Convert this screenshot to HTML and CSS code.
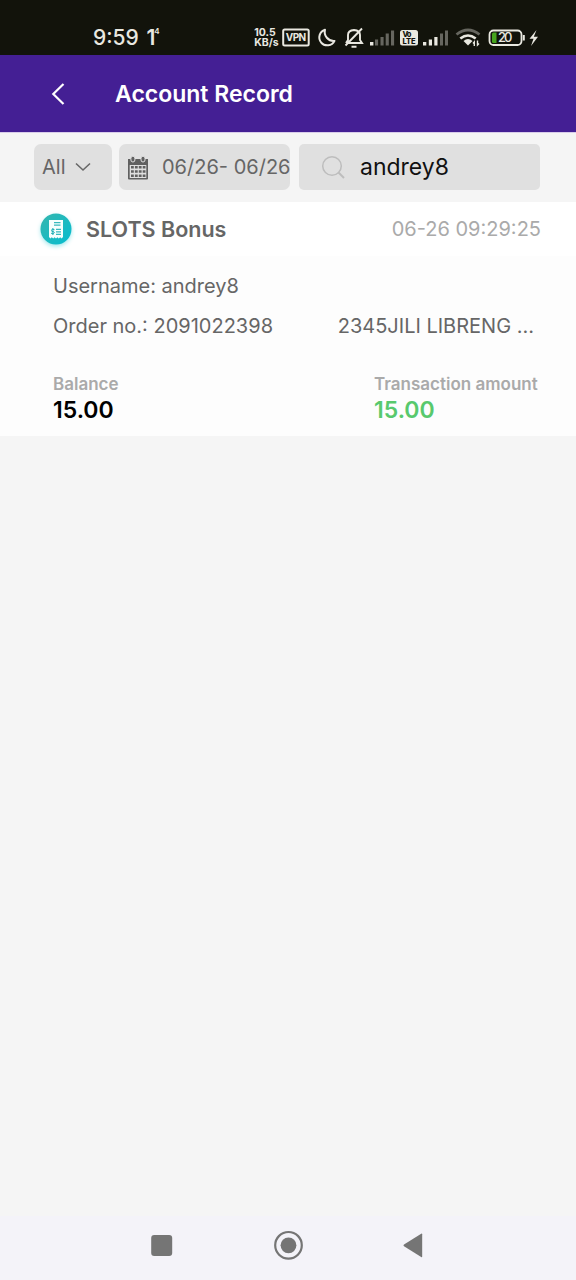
FILE: index.html
```html
<!DOCTYPE html>
<html lang="en">
<head>
<meta charset="utf-8">
<title>Account Record</title>
<link rel="stylesheet" href="styles.css">
</head>
<body>
<div class="screen">
  <div class="status">
    <span class="clock">9:59</span>
    <span class="notice">1<sup>4</sup></span>
    <div class="rate"><span>10.5</span><span>KB/s</span></div>
    <svg class="status-icons" width="296" height="30" viewBox="0 0 296 30" fill="none" stroke="#e9e8e0" stroke-width="2">
      <rect x="3.2" y="6.5" width="25.5" height="16" rx="1.5"/>
      <text class="vpn" x="5.7" y="18.3" textLength="20.5">VPN</text>
      <path d="M45 6.7a8 8 0 1 0 9.5 11.2A9 9 0 0 1 45 6.7Z" stroke-linejoin="round"/>
      <path d="M67.500 20h14.500l-2-3v-5q0-4.500-6-5q-6 .5-6 5v5l-2 3M82 5.500 65.500 22.500M71.500 23.700h5" stroke-width="1.900"/>
      <g stroke="none" fill="#66665f">
        <rect x="95" y="16.500" width="3.100" height="6"/><rect x="100.500" y="14" width="3.100" height="8.500"/><rect x="105.700" y="10.500" width="3.100" height="12"/><rect x="111" y="7.500" width="3.100" height="15"/>
        <rect x="160" y="10.500" width="3" height="12"/><rect x="165" y="7.500" width="3" height="15"/>
      </g>
      <g stroke="none" fill="#e9e8e0">
        <rect x="90" y="19" width="3.400" height="3.500"/>
        <rect x="120" y="7" width="18" height="15.500" rx="2.500"/>
        <rect x="143" y="19" width="3.300" height="3.500"/><rect x="148.800" y="16.500" width="3.200" height="6"/><rect x="154.300" y="14" width="3.200" height="8.500"/>
        <path d="M188 22.500l-4.500-4.500q4.500-4 9 0Z"/>
      </g>
      <text class="lte" x="122.500" y="14.300" textLength="9">Vo</text><text class="lte" x="122.500" y="21.300" textLength="13">LTE</text>
      <path d="M176.500 11.500q11.500-9 23 0" stroke="#66665f" stroke-width="2.800"/>
      <path d="M180.300 15.600q7.700-6.200 15.400 0" stroke-width="2.600"/>
      <path d="M194.300 23v-4l-1.300 1.500M197.500 17.500v4.500l1.500-1.500" stroke-width="1.400"/>
      <rect x="209.500" y="7.500" width="32" height="14.500" rx="4" stroke-width="1.800"/>
      <path d="M243.800 12v5.500" stroke-width="2"/>
      <path d="M216.500 9.500v10.500h-3q-1.500 0-1.500-1.500v-7.500q0-1.500 1.500-1.500Z" fill="#46a41e" stroke="none"/>
      <text class="battery" x="218" y="19.300" textLength="14.500">20</text>
      <path d="M256.500 7l-7 8.800h4l-2.500 7.200 7-9.200h-4.200Z" fill="#e9e8e0" stroke="none"/>
    </svg>
  </div>
  <header class="header">
    <svg class="back" width="16" height="24" viewBox="0 0 16 24" fill="none" stroke="#fff" stroke-width="2.200"><path d="M13.500 2 3.300 12l10.200 10"/></svg>
    <h1>Account Record</h1>
  </header>
  <div class="filters">
    <div class="field type"><span class="type-text">All</span>
      <svg width="16" height="10" viewBox="0 0 16 10" fill="none" stroke="#686868" stroke-width="1.600"><path d="M1 1.500 8 8l7-6.500"/></svg>
    </div>
    <div class="field dates">
      <svg width="22" height="25" viewBox="0 0 22 25">
        <path d="M1 4h20v19.500q0 1-1 1H2q-1 0-1-1Z" fill="#606060"/>
        <rect x="3.900" y="1.200" width="4" height="5.800" rx="2" fill="#606060" stroke="#e0e0e0"/><rect x="14" y="1.200" width="4" height="5.800" rx="2" fill="#606060" stroke="#e0e0e0"/>
        <path d="M2.700 10h16.600v13H2.700Z" fill="#e0e0e0"/>
        <path d="M4 12.300h14.500M4 16.500h14.500M4 20.700h14.500" stroke="#606060" stroke-width="2.600" stroke-dasharray="2.800 1.100"/>
      </svg>
      <span class="date-text">06/26- 06/26</span>
    </div>
    <div class="field search">
      <svg width="24" height="24" viewBox="0 0 24 24" fill="none" stroke="#bdbdbd" stroke-width="1.500"><circle cx="11" cy="11" r="9.300"/><path d="m17.500 17.500 5.500 5.500" stroke-width="2"/></svg>
      <span class="search-text">andrey8</span>
    </div>
  </div>
  <section class="record">
    <div class="record-head">
      <svg class="badge" width="44" height="44" viewBox="0 0 44 44">
        <defs><linearGradient id="teal" x1="0" y1="0" x2="1" y2="1"><stop stop-color="#36b6ae"/><stop offset="1" stop-color="#05bdd0"/></linearGradient></defs>
        <circle class="badge-circle" cx="22" cy="20" r="15.500" fill="url(#teal)"/>
        <path d="M15 11h14v17l-1.400 1.500-1.400-1.200-1.400 1.200-1.400-1.200-1.400 1.200-1.400-1.200-1.400 1.200-1.400-1.200-1.400 1.200L15 28Z" fill="#f7fffd"/>
        <path d="M20 13.700h6.500M20 16.200h6.500M22 20.300h5M22 22.800h5M22 25.300h5" stroke="#39b9bd" stroke-width="1.300"/>
        <path d="M20.500 20.700q-3-1.400-3 .6t2 1.300q1.800 1.400-.2 2.100-1.500.2-2.300-.7M18.900 19v7" fill="none" stroke="#20aeb4" stroke-width="1"/>
      </svg>
      <span class="record-title">SLOTS Bonus</span>
      <span class="time">06-26 09:29:25</span>
    </div>
    <div class="details">
      <div class="line"><span class="user">Username: andrey8</span></div>
      <div class="line"><span class="order">Order no.: 2091022398</span><span class="game">2345JILI LIBRENG …</span></div>
      <div class="amounts">
        <div class="amount"><span class="label balance">Balance</span><span class="value">15.00</span></div>
        <div class="amount transaction"><span class="label">Transaction amount</span><span class="value positive">15.00</span></div>
      </div>
    </div>
  </section>
  <nav class="nav">
    <svg width="30" height="32" viewBox="0 0 30 32"><rect x="4.200" y="6" width="21" height="21" rx="3" fill="#757575"/></svg>
    <svg width="30" height="32" viewBox="0 0 30 32"><circle cx="15.500" cy="16.300" r="13.300" fill="none" stroke="#757575" stroke-width="2.200"/><circle cx="15.500" cy="16.300" r="7.900" fill="#757575"/></svg>
    <svg width="30" height="32" viewBox="0 0 30 32"><path d="M23.200 5.200v22.400q0 1-1 .5L5 17.200q-1.200-.8 0-1.600L22.200 4.700q1-.5 1 .5Z" fill="#757575"/></svg>
  </nav>
</div>
</body>
</html>
```
FILE: styles.css
```css
* { box-sizing: border-box; }
body { margin: 0; font-family: Inter, "Noto Sans", sans-serif; }
svg { display: block; flex: none; }
.screen { width: 576px; height: 1280px; display: flex; flex-direction: column; background: #f5f5f5; white-space: nowrap; }
.status { height: 55px; background: #12130b; color: #e9e8e0; display: flex; padding-top: 23px; padding-left: 93px; }
.clock { width: 56px; font-size: 21px; line-height: 29px; font-weight: 500; }
.notice { width: 113px; font-size: 21px; line-height: 29px; font-weight: 600; display: flex; }
.notice sup { font-size: 8px; line-height: 17px; margin-left: -1px; }
.rate { width: 27px; padding-top: 5px; font-size: 10.500px; line-height: 10px; font-weight: 700; display: flex; flex-direction: column; }
.status-icons { margin-top: 0; }
.status-icons text { stroke: none; fill: #e9e8e0; font-weight: 700; }
.vpn { font-size: 10px; }
.status-icons .lte { font-size: 7.500px; fill: #12130b; font-weight: 800; }
.status-icons .battery { font-size: 13px; font-weight: 500; }
.header { height: 78px; background: #441f94; border-bottom: 1px solid #d9cdea; color: #fff; display: flex; align-items: center; padding-left: 50px; }
.back { margin-right: 49px; }
h1 { margin: 0; font-size: 23px; line-height: 30px; font-weight: 600; letter-spacing: 0; }
.filters { height: 69px; padding: 11px 36px 0 34px; display: flex; }
.field { height: 46px; border-radius: 7px; background: #e0e0e0; color: #666; display: flex; align-items: center; font-size: 20px; }
.type { width: 78px; padding-left: 8px; margin-right: 7px; }
.type-text { width: 33px; }
.dates { width: 171px; padding-left: 8px; margin-right: 9px; }
.dates svg { margin-right: 13px; }
.search { width: 241px; padding-left: 22px; border-radius: 5px; }
.search svg { margin-right: 15px; }
.search-text { font-size: 23px; color: #111; }
.record { height: 234px; background: #fdfdfd; color: #666; }
.record-head { height: 54px; background: #fff; display: flex; align-items: center; padding: 0 35px 0 34px; }
.badge { margin-top: 4px; margin-right: 8px; }
.badge-circle { filter: drop-shadow(0 2px 2px #a5e9ed); }
.record-title { font-size: 21.500px; font-weight: 600; flex: 1; }
.time { font-size: 20px; color: #aaa; }
.details { padding: 10px 42px 0 53px; }
.line { height: 40px; display: flex; justify-content: space-between; align-items: center; font-size: 20px; }
.amounts { display: flex; justify-content: space-between; padding-top: 27px; }
.amount { display: flex; flex-direction: column; }
.label { font-size: 17px; line-height: 22px; font-weight: 600; color: #aaa; }
.value { font-size: 23px; line-height: 30px; font-weight: 600; color: #000; }
.transaction { width: 160px; }
.positive { color: #58c96d; }
.nav { height: 64px; margin-top: auto; background: #f4f3f9; display: flex; justify-content: center; align-items: center; gap: 96px; padding-bottom: 6px; }
```
